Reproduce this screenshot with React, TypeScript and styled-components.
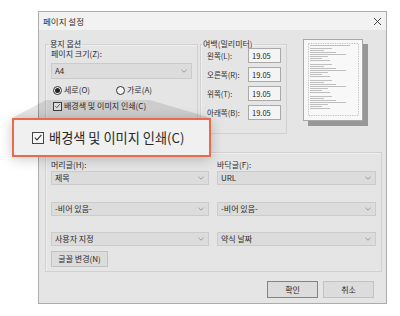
import React from "react";
import styled, { createGlobalStyle } from "styled-components";

const Global = createGlobalStyle`
  html, body { margin: 0; padding: 0; background: #fff; }
  body { font-family: "Noto Sans CJK KR", "Noto Sans", sans-serif; }
`;

const Stage = styled.div`
  position: relative;
  width: 400px;
  height: 316px;
  overflow: hidden;
  background: #fff;
  padding: 11px 0 0 38px;
  box-sizing: border-box;
`;

const Dialog = styled.div`
  width: 349px;
  height: 293px;
  box-sizing: border-box;
  border: 1px solid #acacac;
  background: #e5e5e5;
  display: flex;
  flex-direction: column;
  font-size: 8px;
  line-height: 10px;
  color: #2e2e2e;
`;

const TitleBar = styled.div`
  height: 18px;
  flex: none;
  background: #f2f2f2;
  display: flex;
  align-items: center;
  justify-content: space-between;
  padding: 0 4px 0 4px;
  font-size: 8.5px;
`;

const Body = styled.div`
  flex: 1;
  display: flex;
  flex-direction: column;
  padding: 10px 0 5px 6px;
`;

const TopRow = styled.div`
  display: flex;
  align-items: flex-start;
`;

const Group = styled.fieldset<{ $w: number; $h: number; $ml?: number }>`
  margin: 0 0 0 ${(p) => p.$ml ?? 0}px;
  padding: 0 5px;
  box-sizing: border-box;
  width: ${(p) => p.$w}px;
  height: ${(p) => p.$h}px;
  border: 1px solid #d1d1d1;
  box-shadow: inset 1px 1px 0 #f0f0f0;
  min-inline-size: 0;
`;

const Legend = styled.legend<{ $off: number }>`
  padding: 0 1px;
  margin-left: ${(p) => p.$off}px;
  font-size: 8px;
  line-height: 8px;
`;

const Label = styled.div<{ $mt?: number }>`
  margin-top: ${(p) => p.$mt ?? 0}px;
  height: 10px;
  white-space: nowrap;
`;

const Select = styled.div<{ $h?: number; $mt?: number }>`
  margin-top: ${(p) => p.$mt ?? 0}px;
  height: ${(p) => p.$h ?? 14}px;
  box-sizing: border-box;
  background: #dcdcdc;
  border: 1px solid #cbcbcb;
  display: flex;
  align-items: center;
  justify-content: space-between;
  padding: 0 4px 0 3px;
  color: #2a2a2a;
  white-space: nowrap;
`;

const Chevron = () => (
  <svg width="6" height="4" viewBox="0 0 6 4">
    <path d="M0.5 0.8 L3 3.2 L5.5 0.8" fill="none" stroke="#8a8a8a" strokeWidth="0.8" />
  </svg>
);

const RadioRow = styled.div`
  margin-top: 5px;
  height: 12px;
  display: flex;
  align-items: center;
  padding-left: 2px;
`;

const RadioItem = styled.label<{ $w?: number }>`
  display: flex;
  align-items: center;
  gap: 2px;
  width: ${(p) => (p.$w ? `${p.$w}px` : "auto")};
`;

const RadioCircle = styled.span<{ $on?: boolean }>`
  width: 9px;
  height: 9px;
  box-sizing: border-box;
  border-radius: 50%;
  border: 1px solid #333;
  background: #f4f4f4;
  display: inline-flex;
  align-items: center;
  justify-content: center;
  &::after {
    content: "";
    width: 5px;
    height: 5px;
    border-radius: 50%;
    background: ${(p) => (p.$on ? "#222" : "transparent")};
  }
`;

const CheckRow = styled.div`
  margin-top: 4px;
  height: 12px;
  display: flex;
  align-items: center;
  gap: 2px;
  padding-left: 2px;
`;

const Box = styled.span<{ $s: number }>`
  width: ${(p) => p.$s}px;
  height: ${(p) => p.$s}px;
  box-sizing: border-box;
  border: 1px solid #444;
  background: #f6f6f6;
  display: inline-flex;
  align-items: center;
  justify-content: center;
  flex: none;
`;

const Check = ({ s }: { s: number }) => (
  <svg width={s} height={s} viewBox="0 0 10 10">
    <path d="M1.8 5.2 L4 7.4 L8.4 2.4" fill="none" stroke="#333" strokeWidth="1.1" />
  </svg>
);

const MarginRows = styled.div`
  display: flex;
  flex-direction: column;
  gap: 4px;
`;

const MarginRow = styled.div`
  display: flex;
  align-items: center;
  justify-content: space-between;
  height: 15px;
  font-size: 7.5px;
  padding-left: 1px;
`;

const NumInput = styled.div`
  width: 33px;
  height: 15px;
  box-sizing: border-box;
  border: 1px solid #a9a9a9;
  background: #f4f4f4;
  display: flex;
  align-items: center;
  padding-left: 3px;
  font-size: 7.5px;
  color: #222;
`;

const PreviewPage = styled.div`
  margin: -1px 0 0 16px;
  width: 60px;
  height: 82px;
  box-sizing: border-box;
  border: 1px solid #a8a8a8;
  background: #f8f8f8;
  box-shadow: 5px 5px 0 #979797;
  flex: none;
`;

const HFGroup = styled(Group)`
  margin-top: 14px;
  padding: 4px 5px 0;
`;

const HFGrid = styled.div`
  display: grid;
  grid-template-columns: 158px 159px;
  column-gap: 8px;
`;

const Column = styled.div`
  display: flex;
  flex-direction: column;
`;

const Button = styled.div<{ $primary?: boolean; $w?: number; $h?: number; $mt?: number }>`
  margin-top: ${(p) => p.$mt ?? 0}px;
  width: ${(p) => p.$w ?? 51}px;
  height: ${(p) => p.$h ?? 17}px;
  box-sizing: border-box;
  background: #dcdcdc;
  border: 1px solid ${(p) => (p.$primary ? "#4a90d9" : "#c2c2c2")};
  display: flex;
  align-items: center;
  justify-content: center;
  color: #2a2a2a;
  white-space: nowrap;
`;

const ButtonRow = styled.div`
  margin-top: auto;
  display: flex;
  justify-content: flex-end;
  gap: 5px;
  padding-right: 12px;
`;

const Close = () => (
  <svg width="9" height="9" viewBox="0 0 9 9">
    <path d="M1 1 L8 8 M8 1 L1 8" stroke="#333" strokeWidth="0.9" />
  </svg>
);

const Overlay = styled.svg`
  position: absolute;
  left: 0;
  top: 0;
  pointer-events: none;
`;

const Callout = styled.div`
  position: absolute;
  left: 12px;
  top: 118px;
  width: 199px;
  height: 39px;
  box-sizing: border-box;
  border: 2px solid #ea6a4d;
  background: #f0f0f0;
  box-shadow: 0 2px 12px rgba(0, 0, 0, 0.22);
  display: flex;
  align-items: center;
  gap: 5px;
  padding-left: 18px;
  font-size: 13.2px;
  color: #2a2a2a;
  white-space: nowrap;
`;

const previewLines = (() => {
  const out: { x: number; y: number; w: number }[] = [];
  const blocks = [8, 24, 40, 56];
  const widths = [22, 14, 26, 36, 18, 12, 20];
  blocks.forEach((by) => {
    widths.forEach((w, i) => {
      if (by + i * 2 < 74) out.push({ x: 6, y: by + i * 2, w });
    });
  });
  out.push({ x: 6, y: 5, w: 40 });
  return out;
})();

const Preview = () => (
  <PreviewPage>
    <svg width="58" height="80" viewBox="0 0 58 80">
      <rect x="4.5" y="3.5" width="50" height="72" fill="none" stroke="#b0b0b0" strokeWidth="0.8" strokeDasharray="1.2 1.2" />
      {previewLines.map((l, i) => (
        <rect key={i} x={l.x} y={l.y} width={l.w} height="0.9" fill="#b8b8b8" />
      ))}
    </svg>
  </PreviewPage>
);

const margins = [
  ["왼쪽(L):", "19.05"],
  ["오른쪽(R):", "19.05"],
  ["위쪽(T):", "19.05"],
  ["아래쪽(B):", "19.05"],
];

export default function App() {
  return (
    <>
      <Global />
      <Stage>
        <Dialog>
          <TitleBar>
            <span>페이지 설정</span>
            <Close />
          </TitleBar>
          <Body>
            <TopRow>
              <Group $w={153} $h={94}>
                <Legend $off={-2}>용지 옵션</Legend>
                <Label $mt={1}>페이지 크기(Z):</Label>
                <Select $h={16} $mt={4}>
                  <span>A4</span>
                  <Chevron />
                </Select>
                <RadioRow>
                  <RadioItem $w={63}>
                    <RadioCircle $on />
                    <span>세로(O)</span>
                  </RadioItem>
                  <RadioItem>
                    <RadioCircle />
                    <span>가로(A)</span>
                  </RadioItem>
                </RadioRow>
                <CheckRow>
                  <Box $s={9}>
                    <Check s={8} />
                  </Box>
                  <span>배경색 및 이미지 인쇄(C)</span>
                </CheckRow>
              </Group>
              <Group $w={87} $h={94} $ml={2}>
                <Legend $off={-4}>여백(밀리미터)</Legend>
                <MarginRows>
                  {margins.map(([l, v]) => (
                    <MarginRow key={l}>
                      <span>{l}</span>
                      <NumInput>{v}</NumInput>
                    </MarginRow>
                  ))}
                </MarginRows>
              </Group>
              <Preview />
            </TopRow>
            <HFGroup $w={337} $h={124}>
              <Legend $off={-2}>머리글/바닥글</Legend>
              <HFGrid>
                <Column>
                  <Label>머리글(H):</Label>
                  <Select $mt={1}>
                    <span>제목</span>
                    <Chevron />
                  </Select>
                  <Select $mt={17}>
                    <span>-비어 있음-</span>
                    <Chevron />
                  </Select>
                  <Select $mt={16}>
                    <span>사용자 지정</span>
                    <Chevron />
                  </Select>
                  <Button $w={57} $h={16} $mt={5}>
                    글꼴 변경(N)
                  </Button>
                </Column>
                <Column>
                  <Label>바닥글(F):</Label>
                  <Select $mt={1}>
                    <span>URL</span>
                    <Chevron />
                  </Select>
                  <Select $mt={17}>
                    <span>-비어 있음-</span>
                    <Chevron />
                  </Select>
                  <Select $mt={16}>
                    <span>약식 날짜</span>
                    <Chevron />
                  </Select>
                </Column>
              </HFGrid>
            </HFGroup>
            <ButtonRow>
              <Button $primary>확인</Button>
              <Button>취소</Button>
            </ButtonRow>
          </Body>
        </Dialog>
        <Overlay width="400" height="316" viewBox="0 0 400 316">
          <polygon points="46,100 150,100 211,118 12,118" fill="rgba(0,0,0,0.1)" />
        </Overlay>
        <Callout>
          <Box $s={12}>
            <Check s={11} />
          </Box>
          <span>배경색 및 이미지 인쇄(C)</span>
        </Callout>
      </Stage>
    </>
  );
}
